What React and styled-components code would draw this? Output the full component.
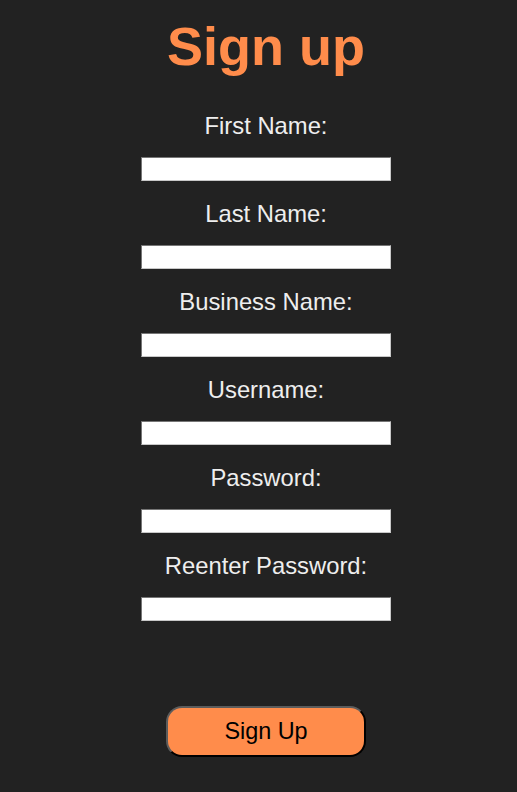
import React from "react";
import styled, { createGlobalStyle } from "styled-components";

const GlobalStyle = createGlobalStyle`
  html, body {
    margin: 0;
    background: #222222;
  }
  body {
    font-family: "Liberation Sans", Arial, sans-serif;
  }
`;

const Page = styled.main`
  display: flex;
  flex-direction: column;
  align-items: center;
  padding: 16px 0 36px 15px;
  min-height: 100vh;
  box-sizing: border-box;
`;

const Title = styled.h1`
  margin: 0 0 35px;
  font-size: 54px;
  line-height: 61px;
  font-weight: 700;
  color: #ff8c4b;
`;

const Form = styled.form`
  display: flex;
  flex-direction: column;
  align-items: center;
  gap: 19px;
`;

const Field = styled.div`
  display: flex;
  flex-direction: column;
  align-items: center;
  gap: 18px;
`;

const Label = styled.label`
  font-size: 23.8px;
  line-height: 27px;
  color: #eeeeee;
`;

const Input = styled.input`
  width: 250px;
  height: 24px;
  box-sizing: border-box;
  margin: 0;
  border: 1px solid;
  border-color: #767676 #c8c8c8 #c8c8c8 #767676;
  background: #ffffff;
  padding: 1px 3px;
`;

const Button = styled.button`
  margin-top: 66px;
  width: 200px;
  height: 51px;
  box-sizing: border-box;
  border-radius: 16px;
  border: 2px solid;
  border-color: #5c5c5c #000000 #000000 #5c5c5c;
  background: #ff8c4b;
  color: #000000;
  font-family: "Liberation Sans", Arial, sans-serif;
  font-size: 23.4px;
  cursor: pointer;
`;

const fields = [
  "First Name:",
  "Last Name:",
  "Business Name:",
  "Username:",
  "Password:",
  "Reenter Password:",
];

export default function App() {
  return (
    <>
      <GlobalStyle />
      <Page>
        <Title>Sign up</Title>
        <Form onSubmit={(e) => e.preventDefault()}>
          {fields.map((f, i) => (
            <Field key={f}>
              <Label htmlFor={"f" + i}>{f}</Label>
              <Input id={"f" + i} type={f.includes("Password") ? "password" : "text"} />
            </Field>
          ))}
          <Button type="submit">Sign Up</Button>
        </Form>
      </Page>
    </>
  );
}
